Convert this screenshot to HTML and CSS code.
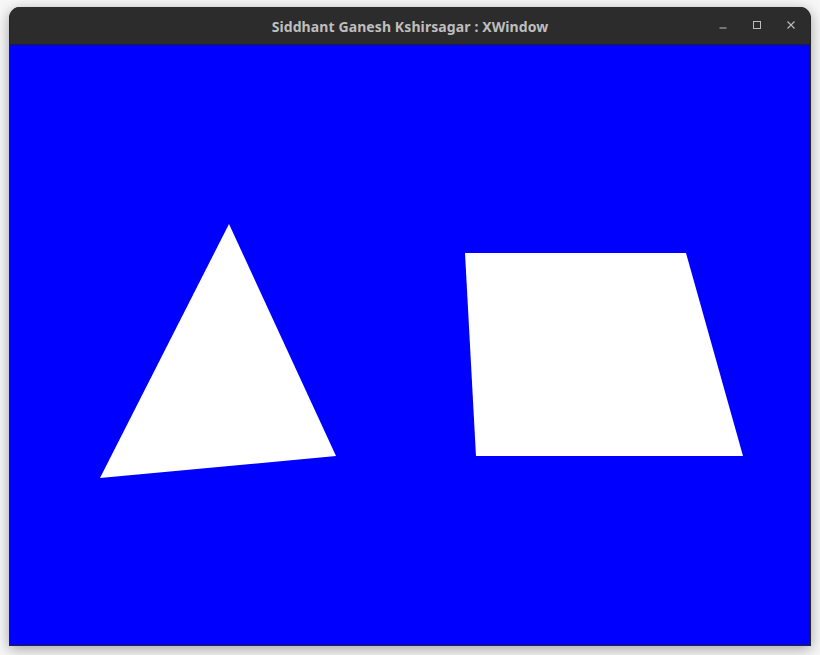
FILE: index.html
```html
<!DOCTYPE html>
<html>
<head>
<meta charset="utf-8">
<link rel="stylesheet" href="styles.css">
</head>
<body>
<div class="window">
  <div class="titlebar">
    <span class="title">Siddhant Ganesh Kshirsagar : XWindow</span>
    <div class="controls">
      <svg class="btn" width="10" height="10" viewBox="0 0 10 10"><line x1="1.5" y1="8" x2="8.5" y2="8" stroke="#bdbdbd" stroke-width="1"/></svg>
      <svg class="btn" width="10" height="10" viewBox="0 0 10 10"><rect x="1.5" y="1.5" width="7" height="7" fill="none" stroke="#bdbdbd" stroke-width="1"/></svg>
      <svg class="btn" width="10" height="10" viewBox="0 0 10 10"><path d="M1.5 1.5 L8.5 8.5 M8.5 1.5 L1.5 8.5" stroke="#bdbdbd" stroke-width="1.1"/></svg>
    </div>
  </div>
  <svg class="canvas" width="800" height="600" viewBox="0 0 800 600">
    <rect width="800" height="600" fill="#0000ff"/>
    <polygon points="219,179 90,433 326,411" fill="#ffffff"/>
    <polygon points="455,208 676,208 733,411 466,411" fill="#ffffff"/>
  </svg>
</div>
</body>
</html>
```
FILE: styles.css
```css
html, body {
  margin: 0;
  padding: 0;
}
body {
  background: #f7f7f7;
  width: 820px;
  height: 655px;
  overflow: hidden;
  padding-top: 7px;
  padding-left: 9px;
  box-sizing: border-box;
}
.window {
  width: 800px;
  border: 1px solid #242424;
  border-top: none;
  border-radius: 11px 11px 0 0;
  background: #2c2c2c;
  box-shadow: 0 3px 14px rgba(0, 0, 0, 0.35);
  overflow: hidden;
}
.titlebar {
  height: 37px;
  border-bottom: 1px solid #1e1e1e;
  display: flex;
  align-items: center;
  justify-content: center;
  position: relative;
  background: #2c2c2c;
}
.title {
  font-family: "Noto Sans", "Open Sans", sans-serif;
  font-weight: bold;
  font-size: 14px;
  color: #bebebe;
  letter-spacing: 0.1px;
  margin-top: 1px;
}
.controls {
  position: absolute;
  right: 14px;
  top: 13px;
  display: flex;
  gap: 24px;
}
.btn {
  display: block;
}
.canvas {
  display: block;
}
```
